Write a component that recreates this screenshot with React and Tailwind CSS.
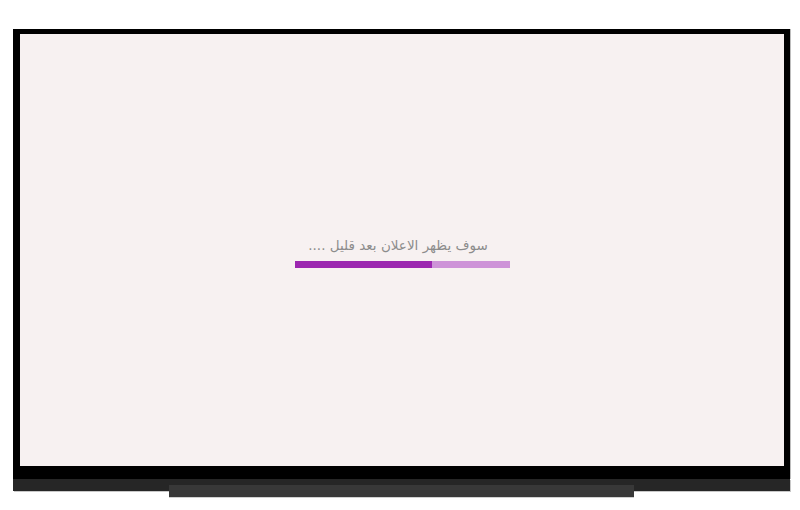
export default function App() {
  const progress = 137 / 215;

  return (
    <div className="w-[800px] h-[510px] bg-white pt-[29px] pl-[13px] overflow-hidden">
      <div className="w-[777px] flex flex-col">
        {/* TV body */}
        <div className="border-black border-t-[5px] border-l-[7px] border-r-[6px] border-b-[13px] shadow-[1px_0_0_#bdbdbd]">
          <div className="h-[432px] bg-[#f7f1f1] flex flex-col items-center justify-center">
            <p
              dir="rtl"
              className="text-[13.5px] leading-[26px] text-[#8c8c8c] mb-[3px] ml-[-8px]"
              style={{ fontFamily: '"DejaVu Sans", sans-serif' }}
            >
              سوف يظهر الاعلان بعد قليل ....
            </p>
            <div className="w-[215px] h-[7px] bg-[#ce93d8] flex">
              <div className="h-full bg-[#9c27b0]" style={{ width: `${progress * 100}%` }} />
            </div>
          </div>
        </div>
        <div className="h-[12px] bg-[#262626] shadow-[1px_1px_0_#c8c8c8]" />
        <div className="ml-[156px] w-[465px] h-[12px] -mt-[6px] bg-[#383838] shadow-[0_1px_0_#d0d0d0]" />
      </div>
    </div>
  );
}
